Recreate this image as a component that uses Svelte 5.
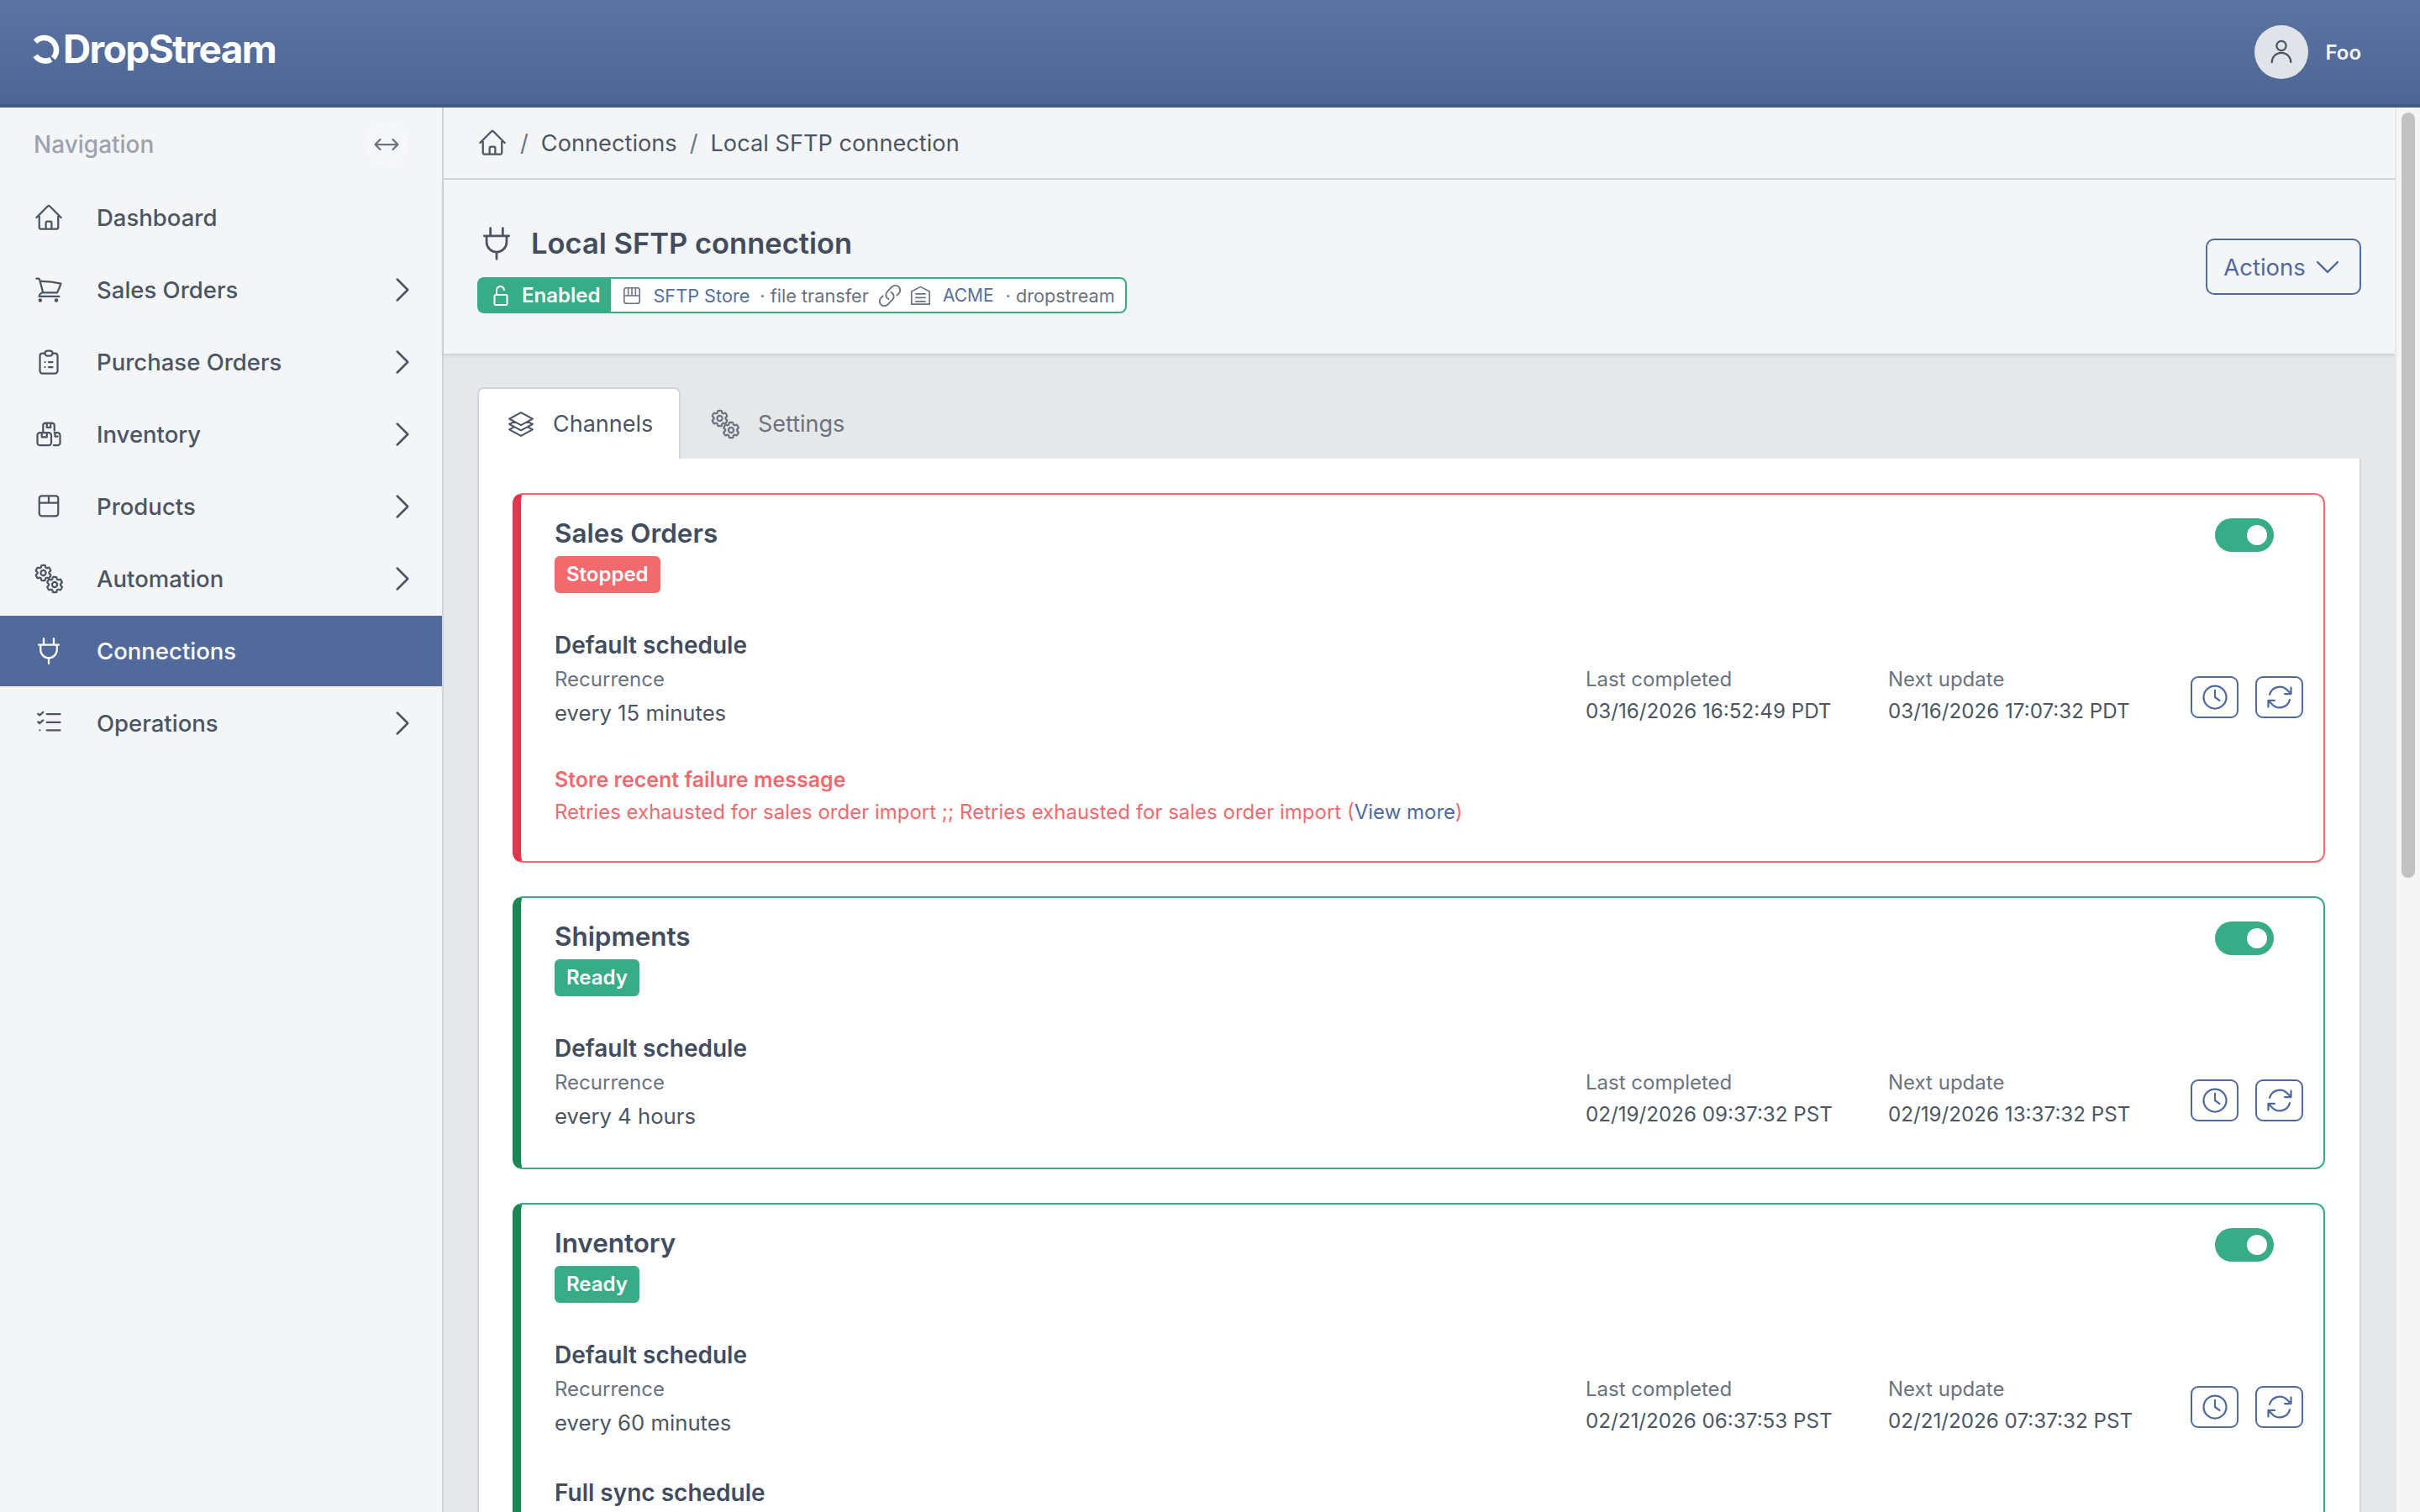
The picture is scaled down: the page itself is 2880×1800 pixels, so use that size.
<script>
  const icons = {
    home: 'm2.25 12 8.954-8.955c.44-.439 1.152-.439 1.591 0L21.75 12M4.5 9.75v10.125c0 .621.504 1.125 1.125 1.125H9.75v-4.875c0-.621.504-1.125 1.125-1.125h2.25c.621 0 1.125.504 1.125 1.125V21h4.125c.621 0 1.125-.504 1.125-1.125V9.75M8.25 21h8.25',
    cart: 'M2.25 3h1.386c.51 0 .955.343 1.087.835l.383 1.437M7.5 14.25a3 3 0 0 0-3 3h15.75m-12.75-3h11.218c1.121-2.3 2.1-4.684 2.924-7.138a60.114 60.114 0 0 0-16.536-1.84M7.5 14.25 5.106 5.272M6 20.25a.75.75 0 1 1-1.5 0 .75.75 0 0 1 1.5 0Zm12.75 0a.75.75 0 1 1-1.5 0 .75.75 0 0 1 1.5 0Z',
    clipboard: 'M9 5H7a2 2 0 00-2 2v12a2 2 0 002 2h10a2 2 0 002-2V7a2 2 0 00-2-2h-2M9 5a2 2 0 002 2h2a2 2 0 002-2M9 5a2 2 0 012-2h2a2 2 0 012 2m-3 7h3m-3 4h3m-6-4h.01M9 16h.01',
    boxes: 'M7.5 10V5a2 2 0 012-2h5a2 2 0 012 2v4M10.5 3v3.5h3V3M5 10.75h7a2 2 0 012 2v6a2 2 0 01-2 2H5a2 2 0 01-2-2v-6a2 2 0 012-2zM6.5 10.75v3.5h4v-3.5M16.5 10.75H19a2 2 0 012 2v6a2 2 0 01-2 2h-3M17 10.75v3h2',
    box: 'M6.5 3.5h11a2 2 0 012 2v12a2 2 0 01-2 2h-11a2 2 0 01-2-2v-12a2 2 0 012-2zM4.5 9h15M12 3.5V9',
    cog: 'M9.594 3.94c.09-.542.56-.94 1.11-.94h2.593c.55 0 1.02.398 1.11.94l.213 1.281c.063.374.313.686.645.87.074.04.147.083.22.127.325.196.72.257 1.075.124l1.217-.456a1.125 1.125 0 0 1 1.37.49l1.296 2.247a1.125 1.125 0 0 1-.26 1.431l-1.003.827c-.293.241-.438.613-.43.992a7.723 7.723 0 0 1 0 .255c-.008.378.137.75.43.991l1.004.827c.424.35.534.955.26 1.43l-1.298 2.247a1.125 1.125 0 0 1-1.369.491l-1.217-.456c-.355-.133-.75-.072-1.076.124a6.47 6.47 0 0 1-.22.128c-.331.183-.581.495-.644.869l-.213 1.281c-.09.543-.56.94-1.11.94h-2.594c-.55 0-1.019-.398-1.11-.94l-.213-1.281c-.062-.374-.312-.686-.644-.87a6.52 6.52 0 0 1-.22-.127c-.325-.196-.72-.257-1.076-.124l-1.217.456a1.125 1.125 0 0 1-1.369-.49l-1.297-2.247a1.125 1.125 0 0 1 .26-1.431l1.004-.827c.292-.24.437-.613.43-.991a6.932 6.932 0 0 1 0-.255c.007-.38-.138-.751-.43-.992l-1.004-.827a1.125 1.125 0 0 1-.26-1.43l1.297-2.247a1.125 1.125 0 0 1 1.37-.491l1.216.456c.356.133.751.072 1.076-.124.072-.044.146-.086.22-.128.332-.183.582-.495.644-.869l.214-1.28ZM15 12a3 3 0 1 1-6 0 3 3 0 0 1 6 0Z',
    plug: 'M8 2v5M16 2v5M4 7h16M5.5 7v4a6.5 6.5 0 0013 0V7M12 17.5V22',
    checklist: 'M10.5 4.7H21M10.5 11.3H21M10.5 17.5H21M3.5 4.5l1.2 1.2 2.8-2.5M3.5 10.9l1.2 1.2 2.8-2.5M5 17.5h.01',
    chevronRight: 'm8.25 4.5 7.5 7.5-7.5 7.5',
    chevronDown: 'm19.5 8.25-7.5 7.5-7.5-7.5',
    arrows: 'M3 12h18M7 8l-4 4 4 4M17 8l4 4-4 4',
    user: 'M15.75 7a3.75 3.75 0 1 1-7.5 0 3.75 3.75 0 0 1 7.5 0ZM4.5 20a7.5 7.5 0 0115 0',
    stack: 'M6.429 9.75 2.25 12l4.179 2.25m0-4.5 5.571 3 5.571-3m-11.142 0L2.25 7.5 12 2.25l9.75 5.25-4.179 2.25m0 0L21.75 12l-4.179 2.25m0 0 4.179 2.25L12 21.75 2.25 16.5l4.179-2.25m11.142 0-5.571 3-5.571-3',
    clock: 'M12 6.5V12l3.6 2.6M21 12a9 9 0 1 1-18 0 9 9 0 0 1 18 0Z',
    refresh: 'M16.023 9.348h4.992v-.001M2.985 19.644v-4.992m0 0h4.992m-4.993 0 3.181 3.183a8.25 8.25 0 0 0 13.803-3.7M4.031 9.865a8.25 8.25 0 0 1 13.803-3.7l3.181 3.182m0-4.991v4.99',
    store: 'M6 3.5h12a2.5 2.5 0 012.5 2.5v12a2.5 2.5 0 01-2.5 2.5H6A2.5 2.5 0 013.5 18V6A2.5 2.5 0 016 3.5zM3.5 12h17M8 3.5V12M12 3.5V12M16 3.5V12',
    link: 'M13.19 8.688a4.5 4.5 0 0 1 1.242 7.244l-4.5 4.5a4.5 4.5 0 0 1-6.364-6.364l1.757-1.757m13.35-.622 1.757-1.757a4.5 4.5 0 0 0-6.364-6.364l-4.5 4.5a4.5 4.5 0 0 0 1.242 7.244',
    warehouse: 'M2.5 21.5V8L12 3l9.5 5v13.5M2.5 21.5h19M7 10.5h10M7 14.5h10M7 18.5h10',
    lock: 'M3 11h12a1.5 1.5 0 011.5 1.5v9A1.5 1.5 0 0115 23H3a1.5 1.5 0 01-1.5-1.5v-9A1.5 1.5 0 013 11zM4 11V6a4.5 4.5 0 019-.8'
  };

  const nav = [
    { label: 'Dashboard', icon: 'home' },
    { label: 'Sales Orders', icon: 'cart', more: true },
    { label: 'Purchase Orders', icon: 'clipboard', more: true },
    { label: 'Inventory', icon: 'boxes', more: true },
    { label: 'Products', icon: 'box', more: true },
    { label: 'Automation', icon: 'gears', more: true },
    { label: 'Connections', icon: 'plug', active: true },
    { label: 'Operations', icon: 'checklist', more: true }
  ];

  const channels = [
    {
      name: 'Sales Orders',
      status: 'Stopped',
      bad: true,
      schedules: [
        { title: 'Default schedule', every: 'every 15 minutes', last: '03/16/2026 16:52:49 PDT', next: '03/16/2026 17:07:32 PDT' }
      ],
      failure: 'Retries exhausted for sales order import ;; Retries exhausted for sales order import'
    },
    {
      name: 'Shipments',
      status: 'Ready',
      schedules: [
        { title: 'Default schedule', every: 'every 4 hours', last: '02/19/2026 09:37:32 PST', next: '02/19/2026 13:37:32 PST' }
      ]
    },
    {
      name: 'Inventory',
      status: 'Ready',
      schedules: [
        { title: 'Default schedule', every: 'every 60 minutes', last: '02/21/2026 06:37:53 PST', next: '02/21/2026 07:37:32 PST' },
        { title: 'Full sync schedule' }
      ]
    }
  ];
</script>

{#snippet icon(name, cls = '')}
  <svg class="icon {cls}" viewBox="0 0 24 24" fill="none" stroke="currentColor" stroke-linecap="round" stroke-linejoin="round">
    {#if name === 'gears'}
      <path d={icons.cog} transform="translate(-0.46 -0.86) scale(0.68)" stroke-width="2.2" />
      <path d={icons.cog} transform="translate(8.54 8.54) scale(0.68)" stroke-width="2.2" />
    {:else}
      <path d={icons[name]} />
    {/if}
  </svg>
{/snippet}

<div class="page">
  <header class="topbar">
    <div class="brand">
      <svg class="brand-mark" viewBox="0 0 36 36" fill="none" stroke="#fff" stroke-width="6.5">
        <path d="M6.1 9.7A14.25 14.25 0 1 1 27.3 29.1" />
        <path d="M24.8 30.8A14.25 14.25 0 0 1 6.1 26.3" />
      </svg>
      <span class="brand-name">DropStream</span>
    </div>
    <div class="user">
      <span class="avatar">{@render icon('user', 'i36')}</span>
      <span class="user-name">Foo</span>
    </div>
  </header>

  <div class="body">
    <aside class="sidebar">
      <div class="nav-head">
        <span class="nav-title">Navigation</span>
        <span class="collapse">{@render icon('arrows', 'i36')}</span>
      </div>
      <nav class="nav-list">
        {#each nav as item}
          <div class="nav-item" class:active={item.active}>
            {@render icon(item.icon, 'i36')}
            <span class="nav-label">{item.label}</span>
            {#if item.more}
              {@render icon('chevronRight', 'nav-chevron')}
            {/if}
          </div>
        {/each}
      </nav>
    </aside>

    <main class="main">
      <div class="crumbs">
        {@render icon('home', 'crumb-home')}
        <span class="slash">/</span>
        <span>Connections</span>
        <span class="slash">/</span>
        <span>Local SFTP connection</span>
      </div>

      <section class="summary">
        <div>
          <div class="summary-title">
            {@render icon('plug', 'title-plug')}
            <h1>Local SFTP connection</h1>
          </div>
          <div class="chip">
            <span class="chip-state">
              <svg class="chip-lock" viewBox="0 0 18 24" fill="none" stroke="currentColor" stroke-width="2" stroke-linecap="round" stroke-linejoin="round"><path d={icons.lock} /></svg>
              Enabled
            </span>
            {@render icon('store', 'chip-store')}
            <span class="chip-link store-name">SFTP Store</span>
            <span class="chip-text store-type">· file transfer</span>
            {@render icon('link', 'chip-chain')}
            {@render icon('warehouse', 'chip-house')}
            <span class="chip-link owner">ACME</span>
            <span class="chip-text owner-name">· dropstream</span>
          </div>
        </div>
        <button class="actions">Actions {@render icon('chevronDown', 'i38')}</button>
      </section>

      <div class="content">
        <div class="tabs">
          <div class="tab current">{@render icon('stack', 'i34')} Channels</div>
          <div class="tab">{@render icon('gears', 'i36')} Settings</div>
        </div>
        <div class="panel">
          {#each channels as channel}
            <article class="card" class:bad={channel.bad}>
              <div class="card-head">
                <div>
                  <h2>{channel.name}</h2>
                  <span class="status">{channel.status}</span>
                </div>
                <span class="toggle"><span class="knob"></span></span>
              </div>

              {#each channel.schedules as schedule}
                <div class="schedule">
                  <h3>{schedule.title}</h3>
                  {#if schedule.every}
                    <div class="schedule-row">
                      <div class="recurrence">
                        <div class="field-label">Recurrence</div>
                        <div class="every">{schedule.every}</div>
                      </div>
                      <div class="time-col">
                        <div class="field-label">Last completed</div>
                        <div class="time">{schedule.last}</div>
                      </div>
                      <div class="time-col">
                        <div class="field-label">Next update</div>
                        <div class="time">{schedule.next}</div>
                      </div>
                      <div class="square-group">
                        <button class="square">{@render icon('clock', 'i36')}</button>
                        <button class="square">{@render icon('refresh', 'i36')}</button>
                      </div>
                    </div>
                  {/if}
                </div>
              {/each}

              {#if channel.failure}
                <div class="failure">
                  <div class="failure-title">Store recent failure message</div>
                  <div class="failure-text">{channel.failure} (<span class="more">View more</span>)</div>
                </div>
              {/if}
            </article>
          {/each}
        </div>
      </div>
    </main>

    <div class="scrollbar"><div class="thumb"></div></div>
  </div>
</div>

<style>
  :global(body) {
    margin: 0;
    overflow: hidden;
    font-family: Inter, "Liberation Sans", sans-serif;
    color: #4b5563;
  }

  .page {
    height: 1800px;
    display: flex;
    flex-direction: column;
    overflow: hidden;
  }

  .icon {
    display: block;
    flex: none;
    stroke-width: 1.5;
  }

  .i34 { width: 34px; height: 34px; }
  .i36 { width: 36px; height: 36px; }
  .i38 { width: 38px; height: 38px; }

  .topbar {
    height: 124px;
    flex: none;
    display: flex;
    align-items: center;
    justify-content: space-between;
    padding: 0 70px 0 36px;
    background: linear-gradient(#5b74a4, #4d6592);
    border-bottom: 4px solid #42577f;
  }

  .brand {
    display: flex;
    align-items: center;
    gap: 3px;
    color: #fff;
    margin-top: -8px;
  }

  .brand-mark {
    width: 36px;
    height: 36px;
  }

  .brand-name {
    font-size: 46px;
    font-weight: 700;
    letter-spacing: -1.6px;
    line-height: 52px;
  }

  .user {
    display: flex;
    align-items: center;
    gap: 20px;
  }

  .avatar {
    width: 64px;
    height: 64px;
    border-radius: 50%;
    background: #e0e3e8;
    color: #4b5563;
    display: flex;
    align-items: center;
    justify-content: center;
  }

  .user-name {
    font-size: 24px;
    font-weight: 600;
    color: #f3f4f6;
  }

  .body {
    flex: 1;
    min-height: 0;
    display: flex;
  }

  .sidebar {
    width: 526px;
    flex: none;
    background: #f4f5f7;
    border-right: 2px solid #d1d5db;
  }

  .nav-head {
    height: 88px;
    display: flex;
    align-items: center;
    justify-content: space-between;
    padding: 0 40px;
  }

  .nav-title {
    font-size: 28px;
    font-weight: 500;
    color: #9ca3af;
  }

  .collapse {
    width: 52px;
    height: 52px;
    border-radius: 50%;
    background: #f6f7f9;
    color: #6b7280;
    display: flex;
    align-items: center;
    justify-content: center;
  }

  .nav-list {
    display: flex;
    flex-direction: column;
    gap: 2px;
    padding-top: 1px;
  }

  .nav-item {
    height: 84px;
    display: flex;
    align-items: center;
    gap: 39px;
    padding: 0 27px 0 40px;
    font-size: 27.5px;
    font-weight: 500;
    color: #4b5563;
  }

  .nav-item.active {
    background: #526a9b;
    color: #fff;
  }

  .nav-label {
    flex: 1;
  }

  :global(.nav-chevron) {
    width: 40px;
    height: 40px;
  }

  .main {
    flex: 1;
    min-width: 0;
    display: flex;
    flex-direction: column;
    background: #e6e7e9;
  }

  .crumbs {
    height: 84px;
    flex: none;
    display: flex;
    align-items: center;
    gap: 15px;
    padding: 0 40px;
    background: #f4f5f7;
    border-bottom: 2px solid #d1d5db;
    font-size: 27.2px;
    color: #4b5563;
  }

  :global(.crumb-home) {
    width: 36px;
    height: 36px;
  }

  .slash {
    color: #6b7280;
  }

  .summary {
    height: 207px;
    flex: none;
    box-sizing: border-box;
    display: flex;
    align-items: center;
    justify-content: space-between;
    padding: 0 40px;
    background: #f4f5f7;
    box-shadow: 0 2px 4px rgba(0, 0, 0, 0.12);
  }

  .summary > div {
    padding-top: 4px;
  }

  .summary-title {
    display: flex;
    align-items: center;
    gap: 19px;
    margin-bottom: 16px;
  }

  :global(.title-plug) {
    width: 44px;
    height: 44px;
    margin-left: 1px;
  }

  h1 {
    margin: 0;
    font-size: 34.5px;
    line-height: 48px;
    font-weight: 600;
    color: #414c5e;
  }

  .chip {
    display: inline-flex;
    align-items: center;
    height: 43px;
    box-sizing: border-box;
    padding-right: 12px;
    background: #fff;
    border: 2px solid #38ac87;
    border-radius: 8px;
    font-size: 21.7px;
  }

  .chip-state {
    height: 100%;
    display: flex;
    align-items: center;
    gap: 16px;
    padding: 0 13px 0 17px;
    background: #38ac87;
    color: #fff;
    font-size: 24px;
    font-weight: 600;
  }

  .chip-lock {
    width: 18px;
    height: 24px;
  }

  .chip :global(.chip-store) {
    width: 26px;
    height: 26px;
    margin-left: 12px;
    color: #6b7280;
  }

  .chip :global(.chip-chain) {
    width: 30px;
    height: 30px;
    margin-left: 10px;
    color: #6b7280;
  }

  .chip :global(.chip-house) {
    width: 27px;
    height: 27px;
    margin-left: 8px;
    color: #6b7280;
  }

  .chip-link { color: #54709f; }
  .chip-text { color: #6b7280; }
  .store-name { margin-left: 12px; }
  .store-type { margin-left: 12px; }
  .owner { margin-left: 13px; font-size: 21px; }
  .owner-name { margin-left: 14px; }

  .actions {
    height: 67px;
    width: 185px;
    box-sizing: border-box;
    display: flex;
    align-items: center;
    justify-content: center;
    gap: 7px;
    padding: 0;
    background: transparent;
    border: 2px solid #4f6a9e;
    border-radius: 10px;
    font: 400 27.5px Inter, sans-serif;
    color: #4f6a9e;
  }

  .content {
    flex: 1;
    min-height: 0;
    padding: 40px 40px 0;
  }

  .tabs {
    display: flex;
    height: 85px;
  }

  .tab {
    display: flex;
    align-items: center;
    gap: 21px;
    padding: 0 33px;
    font-size: 27px;
    color: #6b7280;
    border: 2px solid transparent;
    border-bottom: 0;
    border-radius: 8px 8px 0 0;
  }

  .tab.current {
    width: 242px;
    box-sizing: border-box;
    padding: 0 0 0 33px;
    background: #fff;
    border-color: #d1d5db;
    color: #4b5563;
  }

  .panel {
    height: 1400px;
    box-sizing: border-box;
    padding: 41px 41px 0 40px;
    background: #fff;
    border: 2px solid #d1d5db;
    border-width: 0 2px;
    display: flex;
    flex-direction: column;
    gap: 40px;
  }

  .card {
    flex: none;
    box-sizing: border-box;
    padding: 26px 24px 43px 40px;
    border: 2px solid #38ac87;
    border-left: 10px solid #198754;
    border-radius: 12px;
  }

  .card.bad {
    padding-bottom: 40px;
    border-color: #f26a6d;
    border-left-color: #e0354d;
  }

  .card-head {
    display: flex;
    justify-content: space-between;
    align-items: flex-start;
  }

  h2 {
    margin: 0 0 7px;
    font-size: 31.4px;
    line-height: 40px;
    font-weight: 600;
    color: #414c5e;
  }

  .status {
    display: block;
    width: fit-content;
    height: 44px;
    line-height: 44px;
    padding: 0 14px;
    border-radius: 6px;
    background: #38ac87;
    color: #fff;
    font-size: 24px;
    font-weight: 600;
  }

  .bad .status {
    background: #f26a6d;
  }

  .toggle {
    width: 70px;
    height: 40px;
    margin: 2px 35px 0 0;
    box-sizing: border-box;
    padding: 8px 8px 8px 0;
    display: flex;
    justify-content: flex-end;
    border-radius: 20px;
    background: #38ac87;
  }

  .knob {
    width: 24px;
    height: 24px;
    border-radius: 50%;
    background: #fff;
  }

  .schedule {
    margin-top: 44px;
  }

  .schedule + .schedule {
    margin-top: 47px;
  }

  h3 {
    margin: 0 0 7px;
    font-size: 28px;
    line-height: 36px;
    font-weight: 600;
    color: #414c5e;
  }

  .schedule-row {
    display: flex;
    align-items: center;
    gap: 20px;
  }

  .recurrence {
    flex: 1;
  }

  .field-label {
    font-size: 24px;
    line-height: 32px;
    color: #6b7280;
  }

  .every {
    margin-top: 6px;
    font-size: 25.7px;
    line-height: 36px;
    color: #4b5563;
  }

  .time-col {
    width: 340px;
    align-self: flex-start;
  }

  .time {
    margin-top: 6px;
    font-size: 24.2px;
    line-height: 32px;
    color: #4b5563;
  }

  .square-group {
    display: flex;
    gap: 20px;
  }

  .square {
    width: 57px;
    height: 50px;
    box-sizing: border-box;
    display: flex;
    align-items: center;
    justify-content: center;
    padding: 0;
    background: #fff;
    border: 2px solid #4f6a9e;
    border-radius: 9px;
    color: #4f6a9e;
  }

  .failure {
    margin-top: 43px;
  }

  .failure-title {
    font-size: 25px;
    line-height: 36px;
    font-weight: 600;
    color: #f26a6d;
  }

  .failure-text {
    margin-top: 3px;
    font-size: 24px;
    line-height: 36px;
    color: #f26a6d;
  }

  .more {
    color: #4f6a9e;
  }

  .scrollbar {
    width: 30px;
    flex: none;
    background: #f5f5f5;
    border-left: 2px solid #e5e7eb;
    padding: 6px 6px 0 6px;
    box-sizing: border-box;
  }

  .thumb {
    width: 16px;
    height: 911px;
    border-radius: 8px;
    background: #c1c1c1;
  }
</style>
